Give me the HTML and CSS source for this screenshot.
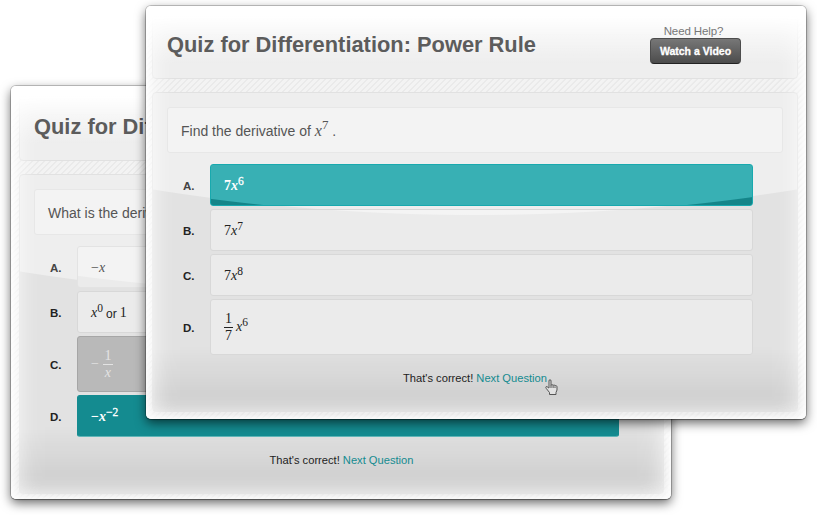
FILE: index.html
```html
<!DOCTYPE html>
<html lang="en">
<head>
<meta charset="utf-8">
<title>Quiz</title>
<link rel="stylesheet" href="styles.css">
</head>
<body>
<div class="window back">
  <header class="panel head"><h1>Quiz for Dif</h1></header>
  <main class="panel body">
    <div class="question">What is the deriv</div>
    <ol class="answers">
      <li><b class="soft">A.</b><div class="card lit"><span class="math">−<i>x</i></span></div></li>
      <li><b>B.</b><div class="card"><span class="math"><i>x</i><sup>0</sup></span><span class="word">or</span><span class="math">1</span></div></li>
      <li><b>C.</b><div class="card tall wrong"><span class="math">−</span><span class="frac wide"><span>1</span><i>x</i></span></div></li>
      <li><b>D.</b><div class="card right"><span class="math">−<i>x</i><sup>−2</sup></span></div></li>
    </ol>
    <p class="result">That's correct! <a>Next Question</a></p>
  </main>
</div>
<div class="window front">
  <header class="panel head">
    <h1>Quiz for Differentiation: Power Rule</h1>
    <div class="help"><span>Need Help?</span><button>Watch a Video</button></div>
  </header>
  <main class="panel body">
    <div class="question">Find the derivative of <span class="math"><i>x</i><sup>7</sup></span> .</div>
    <ol class="answers">
      <li><b class="soft">A.</b><div class="card right shine"><span class="math">7<i>x</i><sup>6</sup></span></div></li>
      <li><b>B.</b><div class="card tail"><span class="math">7<i>x</i><sup>7</sup></span></div></li>
      <li><b>C.</b><div class="card"><span class="math">7<i>x</i><sup>8</sup></span></div></li>
      <li><b>D.</b><div class="card tall"><span class="frac"><span>1</span><span>7</span></span><span class="math"><i>x</i><sup>6</sup></span></div></li>
    </ol>
    <p class="result">That's correct! <a>Next Question</a></p>
  </main>
  <svg class="hand" viewBox="0 0 13 16" width="13" height="16"><path d="M4 9V2q0-1.300 1-1.300T6 2v4.500q.2-1 1.100-.9t1 .9q.2-.7 1-.6t.9 1q.3-.6 1-.4t1 1.200V11l-1 2.500v2H4.500v-2L1.300 9.500Q.3 8 1.200 7.600T3 8.500zM6 6.500V9M8.100 6.700V9M10 7.300V9" fill="#e2e2e2" stroke="#555"/></svg>
</div>
</body>
</html>
```
FILE: styles.css
```css
* { box-sizing: border-box; }
body { margin: 0; width: 817px; height: 515px; position: relative; overflow: hidden; background: #fff; font-family: "Liberation Sans", Arial, sans-serif; color: #222; }
.window {
  position: absolute; isolation: isolate; width: 660px; height: 413px; border-radius: 5px;
  padding: 7px 8px 7px 6px; display: flex; flex-direction: column; gap: 13px;
  background: repeating-linear-gradient(135deg, #eaeaea 0 1px, #f3f3f3 1.500px 3.700px, #eaeaea 4.240px);
  box-shadow: 0 0 0 1px rgba(0,0,0,.2), 0 1px 1px rgba(0,0,0,.25), 0 4px 11px rgba(0,0,0,.6);
}
.back { left: 11px; top: 86px; padding: 9px 7px 5px 8px; }
.front { left: 146px; top: 6px; }
.window::before {
  content: ""; position: absolute; inset: 0; z-index: 1; border-radius: 5px;
  background:
    linear-gradient(#fff 10px, rgba(255,255,255,.75) 20px, rgba(255,255,255,.4) 35px, transparent 58px),
    linear-gradient(transparent 340px, rgba(0,0,0,.07) 388px, rgba(0,0,0,.05));
  box-shadow: inset 4px 0 5px rgba(255,255,255,.6), inset 12px 0 20px -2px rgba(255,255,255,.65), inset -4px 0 5px rgba(255,255,255,.6), inset -12px 0 20px -2px rgba(255,255,255,.65), inset 0 -8px 12px -1px rgba(255,255,255,.22);
}
.panel { border: 1px solid #e1e1e1; border-radius: 4px; background: #eee; }
.panel > * { position: relative; z-index: 2; }
.head { height: 66px; display: flex; justify-content: space-between; padding: 0 56px 0 14px; }
h1 { margin: 18px 0 0; font-size: 21.850px; line-height: 26px; color: #5c5c5c; white-space: nowrap; }
.help { margin-top: 10px; display: flex; flex-direction: column; align-items: center; font-size: 11.500px; line-height: 14px; color: #777; }
.help span { margin-right: 4px; letter-spacing: -.1px; }
button { margin: 0; padding: 0; width: 91px; height: 26px; border: 1px solid #4c4c4c; border-bottom-color: #222; border-radius: 4px; background: linear-gradient(#777, #4c4c4c); color: #fff; font: bold 10.500px "Liberation Sans", Arial, sans-serif; -webkit-text-stroke: .3px #fff; }
.body { flex: 1; padding: 14px; background: radial-gradient(circle at 322px -1922px, #eee 2043.500px, #e2e2e2 2044.500px); }
.question { height: 46px; border: 1px solid #e7e7e7; border-radius: 3px; background: #f3f3f3; padding: 0 13px; line-height: 46px; font-size: 14px; color: #555; white-space: nowrap; }
.question .math { font-size: 16px; top: 0; }
.question .math sup { font-size: 13px; vertical-align: 7px; }
.answers { list-style: none; margin: 11px 30px 0 15px; padding: 0; display: flex; flex-direction: column; gap: 3px; }
.answers li { display: grid; grid-template-columns: 28px 1fr; align-items: center; }
.answers b { font-size: 11.500px; padding: 1px 0 0 1px; }
.answers .soft { color: #444; }
.card { height: 42px; border: 1px solid #d8d8d8; border-radius: 3px; background: #ebebeb; display: flex; align-items: center; padding: 1px 13px 0; }
.tall { height: 56px; padding-top: 0; }
.lit { border-color: #e3e3e3; background: radial-gradient(circle at 264px -1998px, #f3f3f3 2043.500px, #ebebeb 2044.500px); color: #555; }
.tail { background: radial-gradient(circle at 264px -2039px, #f4f4f4 2043.500px, #ebebeb 2044.500px); }
.wrong { background: #b9b9b9; border-color: #a6a6a6; color: #e3e3e3; }
.right { background: #148b90; border-color: #148b90; border-bottom-color: #5fb5b7; color: #fff; }
.right .math { font-weight: bold; }
.shine { border-color: #18a9ae; background: radial-gradient(circle at 264px -1993px, #38b0b4 2043.500px, #148589 2044.500px); }
.math { font-family: "Liberation Serif", "Times New Roman", serif; font-size: 14px; line-height: 16px; }
.math sup { font-size: 11.500px; line-height: 0; vertical-align: 5px; font-weight: normal; }
.right sup { -webkit-text-stroke: .3px #fff; }
.word { font-size: 12px; margin: 2px 3px 0; }
.frac { display: inline-grid; width: 9px; margin-right: 3px; text-align: center; font: 14px/16px "Liberation Serif", serif; }
.frac > :first-child { border-bottom: 1px solid; }
.wide { margin-left: 4px; width: 10px; }
.result { margin: 15px 0 0; font-size: 11.150px; line-height: 16px; text-align: center; }
.result a { color: #148b90; }
.hand { position: absolute; left: 399px; top: 373px; z-index: 3; }
```
